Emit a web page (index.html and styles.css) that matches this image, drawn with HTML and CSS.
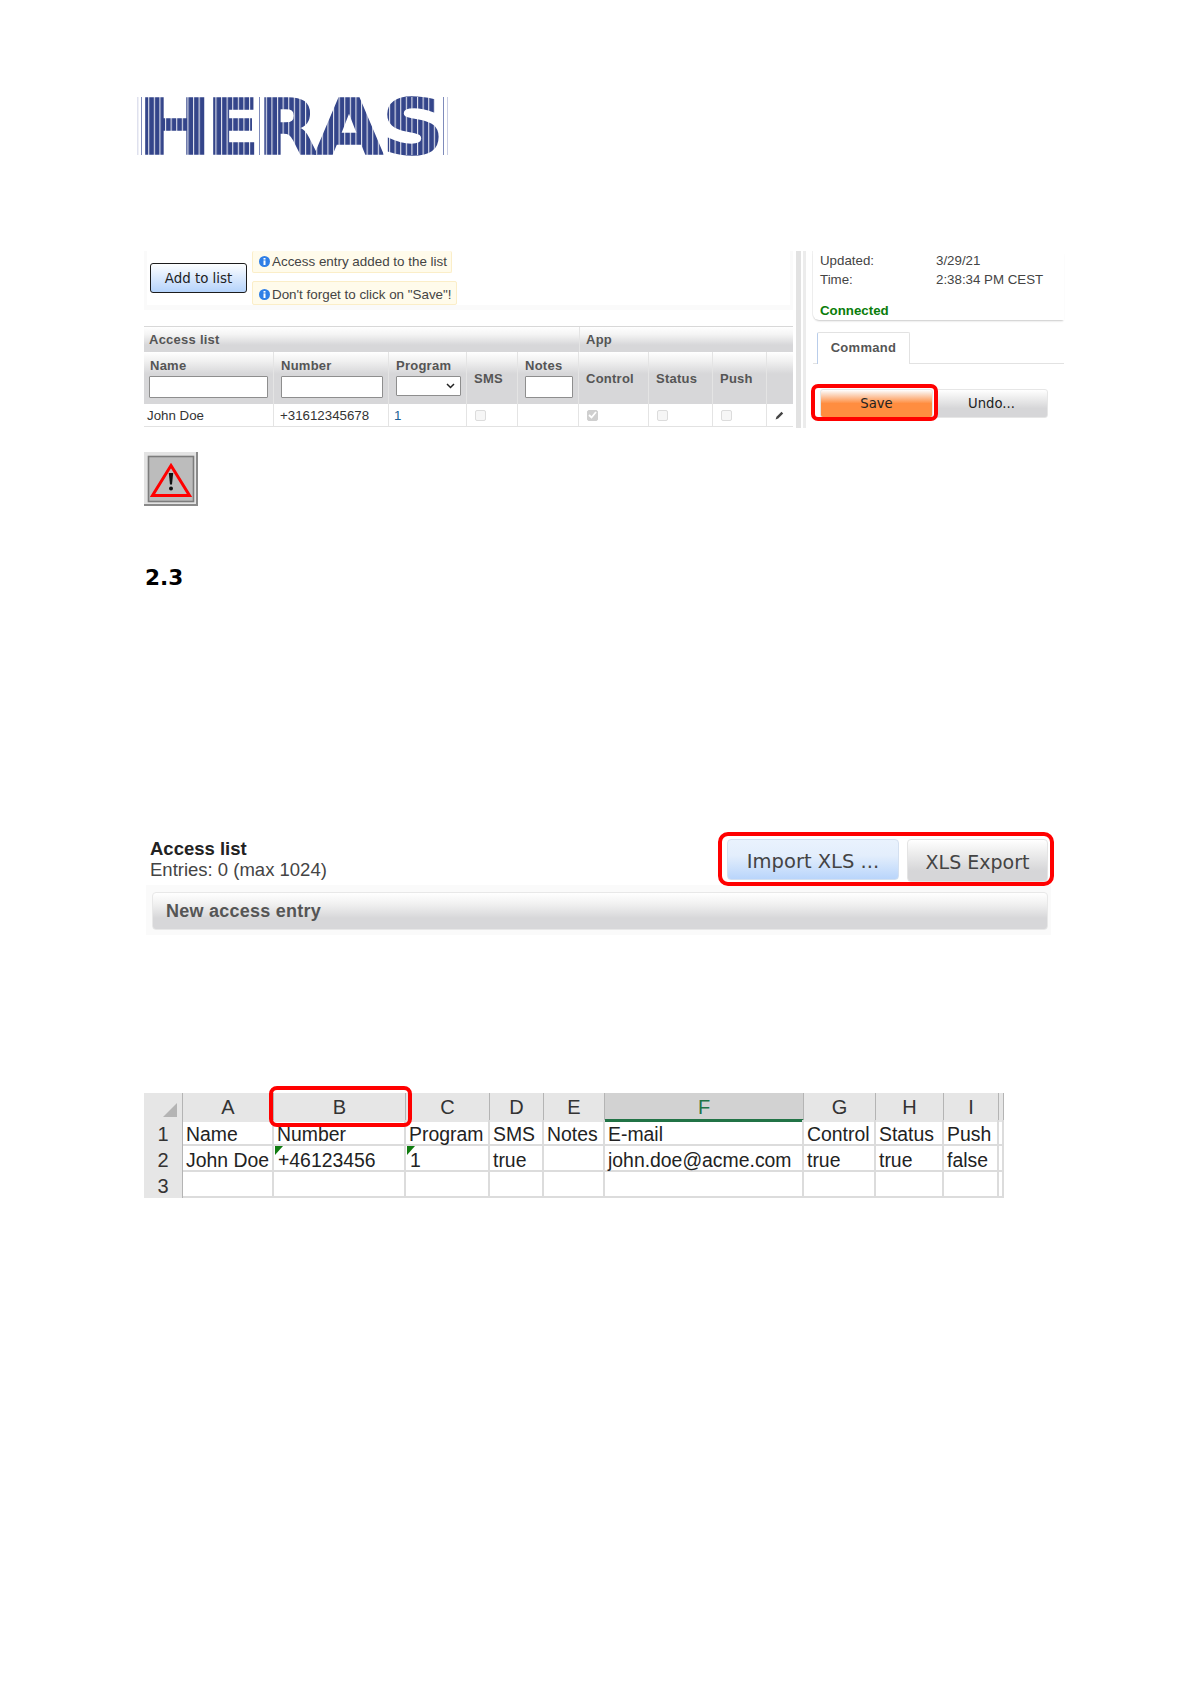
FILE: index.html
```html
<!DOCTYPE html>
<html lang="en">
<head>
<meta charset="utf-8">
<title>Access list</title>
<link rel="stylesheet" href="styles.css">
</head>
<body>
<main class="page">
  <svg class="logo" width="312" height="58" viewBox="0 0 312 58" role="img" aria-label="HERAS">
    <defs>
      <pattern id="stripes" width="5.6" height="58" patternUnits="userSpaceOnUse">
        <rect x="0" y="0" width="1.1" height="58" fill="#fff" opacity=".85"/>
      </pattern>
    </defs>
    <text class="logo-text" y="56.5"><tspan x="1" textLength="74" lengthAdjust="spacingAndGlyphs">H</tspan><tspan x="70" textLength="52" lengthAdjust="spacingAndGlyphs">E</tspan><tspan x="121" textLength="60" lengthAdjust="spacingAndGlyphs">R</tspan><tspan x="178" textLength="68" lengthAdjust="spacingAndGlyphs">A</tspan><tspan x="245" textLength="62" lengthAdjust="spacingAndGlyphs">S</tspan></text>
    <rect x="0" y="0" width="312" height="58" fill="url(#stripes)"/>
    <rect x="0" y="0" width="1.5" height="58" fill="#dfe1ee"/>
    <rect x="4" y="0" width="1" height="58" fill="#7f8bbb"/>
    <rect x="122" y="0" width="1" height="58" fill="#7f8bbb"/>
    <rect x="306" y="0" width="1" height="58" fill="#7f8bbb"/>
    <rect x="310" y="0" width="1" height="58" fill="#c9cde3"/>
  </svg>

  <section class="screen">
    <div class="screen-left">
      <div class="notice-box">
        <div class="notice-inner">
          <button class="btn-add" type="button">Add to list</button>
          <div class="notices">
            <div class="notice notice-first">
              <svg class="info" width="11" height="11" viewBox="0 0 11 11"><circle cx="5.5" cy="5.5" r="5.5" fill="#2f7fe6"/><rect x="4.5" y="2" width="2" height="1.6" fill="#fff"/><rect x="4.5" y="4.4" width="2" height="4.6" fill="#fff"/></svg>
              <span>Access entry added to the list</span>
            </div>
            <div class="notice notice-second">
              <svg class="info" width="11" height="11" viewBox="0 0 11 11"><circle cx="5.5" cy="5.5" r="5.5" fill="#2f7fe6"/><rect x="4.5" y="2" width="2" height="1.6" fill="#fff"/><rect x="4.5" y="4.4" width="2" height="4.6" fill="#fff"/></svg>
              <span>Don't forget to click on "Save"!</span>
            </div>
          </div>
        </div>
      </div>

      <div class="access">
        <div class="group-row">
          <div class="group group-main">Access list</div>
          <div class="group group-app">App</div>
        </div>
        <div class="head-row">
          <div class="hcell hcell-stack hcell-name"><span>Name</span><input class="field" type="text"></div>
          <div class="hcell hcell-stack hcell-wide"><span>Number</span><input class="field" type="text"></div>
          <div class="hcell hcell-stack hcell-wide"><span>Program</span>
            <div class="select"><svg width="9" height="6" viewBox="0 0 9 6"><path d="M1 1l3.5 3.5L8 1" fill="none" stroke="#222" stroke-width="1.5"/></svg></div>
          </div>
          <div class="hcell hcell-mid">SMS</div>
          <div class="hcell hcell-stack hcell-notes"><span>Notes</span><input class="field" type="text"></div>
          <div class="hcell hcell-mid">Control</div>
          <div class="hcell hcell-mid">Status</div>
          <div class="hcell hcell-mid">Push</div>
          <div class="hcell"></div>
        </div>
        <div class="data-row">
          <div class="dcell dcell-name">John Doe</div>
          <div class="dcell dcell-number">+31612345678</div>
          <div class="dcell dcell-blue">1</div>
          <div class="dcell dcell-check"><span class="check"></span></div>
          <div class="dcell"></div>
          <div class="dcell dcell-check"><span class="check check-on"><svg width="9" height="8" viewBox="0 0 9 8"><path d="M1 4l2.5 2.5L8 1" fill="none" stroke="#fff" stroke-width="1.8"/></svg></span></div>
          <div class="dcell dcell-check"><span class="check"></span></div>
          <div class="dcell dcell-check"><span class="check"></span></div>
          <div class="dcell dcell-edit"><svg width="9" height="9" viewBox="0 0 9 9"><path d="M6.5.8l1.7 1.7-5 5-2.6.9.9-2.6z" fill="#444"/></svg></div>
        </div>
      </div>
    </div>

    <div class="splitter"><span class="split-a"></span><span class="split-b"></span></div>

    <aside class="side">
      <div class="status">
        <div class="status-grid">
          <span>Updated:</span><span>3/29/21</span>
          <span>Time:</span><span>2:38:34 PM CEST</span>
        </div>
        <div class="connected">Connected</div>
      </div>
      <div class="tabs"><div class="tab">Command</div></div>
      <div class="commands">
        <button class="btn-cmd btn-save" type="button">Save</button>
        <button class="btn-cmd btn-undo" type="button">Undo...</button>
        <div class="red-box red-save"></div>
      </div>
    </aside>
  </section>

  <svg class="warning" width="54" height="54" viewBox="0 0 54 54" role="img" aria-label="Warning">
    <rect width="54" height="54" fill="#e3e3e3"/>
    <path d="M54 0v54H0v-2h52V0z" fill="#8a8a8a"/>
    <rect x="4.5" y="4.5" width="45" height="45" fill="#bcbcbc" stroke="#7c7c7c" stroke-width="1.6"/>
    <path d="M27 13.5L45.5 43.5H8.5z" fill="none" stroke="#f00" stroke-width="3"/>
    <path d="M24.8 21h4.4l-1.2 11.5h-2z" fill="#111"/>
    <circle cx="27" cy="36.5" r="2" fill="#111"/>
  </svg>

  <h2 class="heading">2.3</h2>

  <section class="import">
    <div class="import-head">
      <div class="import-title">
        <div class="import-name">Access list</div>
        <div class="import-count">Entries: 0 (max 1024)</div>
      </div>
      <div class="import-actions">
        <button class="btn-xls btn-import" type="button">Import XLS ...</button>
        <button class="btn-xls btn-export" type="button">XLS Export</button>
      </div>
      <div class="red-box red-xls"></div>
    </div>
    <div class="entry-wrap"><div class="entry-bar">New access entry</div></div>
  </section>

  <section class="sheet">
    <div class="sh-row sh-top">
      <div class="sh-corner"><svg width="14" height="14" viewBox="0 0 14 14"><path d="M14 0v14H0z" fill="#b4b4b4"/></svg></div>
      <div class="sh-col">A</div><div class="sh-col">B</div><div class="sh-col">C</div><div class="sh-col">D</div><div class="sh-col">E</div>
      <div class="sh-col sh-col-active">F</div>
      <div class="sh-col">G</div><div class="sh-col">H</div><div class="sh-col">I</div><div class="sh-col"></div>
    </div>
    <div class="sh-row">
      <div class="sh-num">1</div>
      <div class="sh-cell">Name</div><div class="sh-cell">Number</div><div class="sh-cell">Program</div><div class="sh-cell">SMS</div><div class="sh-cell">Notes</div><div class="sh-cell">E-mail</div><div class="sh-cell">Control</div><div class="sh-cell">Status</div><div class="sh-cell">Push</div><div class="sh-cell"></div>
    </div>
    <div class="sh-row">
      <div class="sh-num">2</div>
      <div class="sh-cell">John Doe</div><div class="sh-cell sh-flag">+46123456</div><div class="sh-cell sh-flag">1</div><div class="sh-cell">true</div><div class="sh-cell"></div><div class="sh-cell">john.doe@acme.com</div><div class="sh-cell">true</div><div class="sh-cell">true</div><div class="sh-cell">false</div><div class="sh-cell"></div>
    </div>
    <div class="sh-row sh-last">
      <div class="sh-num">3</div>
      <div class="sh-cell"></div><div class="sh-cell"></div><div class="sh-cell"></div><div class="sh-cell"></div><div class="sh-cell"></div><div class="sh-cell"></div><div class="sh-cell"></div><div class="sh-cell"></div><div class="sh-cell"></div><div class="sh-cell"></div>
    </div>
    <div class="red-box red-col"></div>
  </section>
</main>
</body>
</html>
```

FILE: styles.css
```css
* { box-sizing: border-box; }
html, body { margin: 0; padding: 0; background: #fff; }
body { font-family: "Liberation Sans", Arial, sans-serif; color: #333; }
.page { width: 1193px; height: 1685px; overflow: hidden; padding-top: 97px; }
button { font: inherit; padding: 0; cursor: default; }

.logo { display: block; margin-left: 137px; overflow: visible; }
.logo-text { font-family: "DejaVu Sans", sans-serif; font-weight: 700; font-size: 76px; fill: #34458a; stroke: #34458a; stroke-width: 1.6px; }

.red-box { position: absolute; border: 4px solid #f00; pointer-events: none; }

/* first screenshot */
.screen { display: flex; margin: 96px 0 0 144px; width: 920px; height: 177px; }
.screen-left { width: 649px; flex: none; }
.notice-box { height: 59px; background: #fafafa; padding: 0 3px 5px; }
.notice-inner { display: flex; height: 54px; background: #fff; padding-left: 3px; }
.btn-add { width: 97px; height: 30px; margin-top: 12px; border: 1px solid #1c1c1c; border-radius: 3px; background: linear-gradient(#fdfeff, #b5d3fb); font-family: "DejaVu Sans", sans-serif; font-size: 13.4px; color: #222; }
.notices { display: flex; flex-direction: column; align-items: flex-start; gap: 8px; margin-left: 5px; }
.notice { display: flex; align-items: center; gap: 2px; padding: 0 4px 0 6px; background: #fffbeb; border: 1px solid #fbeec8; border-radius: 2px; font-size: 13.4px; color: #444; white-space: nowrap; }
.notice-first { height: 22px; border-top: 0; }
.notice-second { height: 24px; padding-top: 2px; }
.info { flex: none; }

.access { margin-top: 16px; border-top: 1px solid #d8d8d8; border-bottom: 1px solid #e2e2e2; }
.group-row { display: grid; grid-template-columns: 435px 1fr; height: 25px; }
.group { display: flex; align-items: center; padding-left: 5px; font-weight: 700; font-size: 13px; letter-spacing: .25px; color: #555; background: linear-gradient(#fff 0, #f4f4f4 30%, #d7d7d9 72%, #d7d7d9 100%); }
.group-app { border-left: 1px solid #e4e4e4; padding-left: 6px; }
.head-row, .data-row { display: grid; grid-template-columns: 130px 115px 78px 51px 61px 70px 64px 54px 26px; }
.head-row { height: 52px; }
.hcell { font-weight: 700; font-size: 13px; letter-spacing: .25px; color: #555; border-right: 1px solid #e4e4e4; background: linear-gradient(#fff 0, #f0f0f0 18%, #d7d7d9 42%, #d7d7d9 100%); padding-left: 7px; }
.hcell:last-child { border-right: 0; }
.hcell-stack { display: flex; flex-direction: column; gap: 3px; padding: 6px 5px 0; line-height: 15px; }
.hcell-name span { padding-left: 1px; }
.hcell-wide { padding-left: 7px; }
.hcell-notes { padding-left: 7px; }
.hcell-mid { display: flex; align-items: center; }
.field { display: block; width: 100%; height: 22px; margin: 0; padding: 0; background: #fff; border: 1px solid #8e8e8e; border-radius: 1px; }
.select { display: flex; align-items: center; justify-content: flex-end; width: 65px; height: 20px; padding-right: 5px; background: #fff; border: 1px solid #8e8e8e; border-radius: 1px; }
.data-row { height: 22px; }
.dcell { display: flex; align-items: center; padding-left: 3px; font-size: 13.3px; color: #333; border-right: 1px solid #e4e4e4; }
.dcell:last-child { border-right: 0; }
.dcell-number { padding-left: 6px; }
.dcell-blue { color: #1c5f96; padding-left: 5px; }
.dcell-check { padding-left: 8px; }
.dcell-edit { padding-left: 8px; }
.check { display: flex; align-items: center; justify-content: center; width: 11px; height: 11px; background: #f6f6f6; border: 1px solid #dcdcdc; border-radius: 2px; }
.check-on { background: #cfcfcf; border-color: #cfcfcf; }

.splitter { display: flex; flex: none; width: 20px; padding-left: 3px; gap: 2px; height: 177px; }
.split-a { width: 5px; background: #e2e2e2; }
.split-b { width: 3px; background: #ececec; }

.side { position: relative; flex: none; width: 251px; font-size: 13.3px; }
.status { height: 69px; padding-left: 7px; border-bottom-left-radius: 6px; box-shadow: 0 2px 2px -1px #c9c9c9, -1px 0 0 #f0f0f0; }
.status-grid { display: grid; grid-template-columns: 116px 1fr; grid-auto-rows: 19px; align-items: center; color: #444; }
.connected { margin-top: 12px; line-height: 19px; font-weight: 700; color: #0a7d0a; }
.tabs { margin-top: 12px; height: 32px; padding-left: 4px; border-bottom: 1px solid #e2e2e2; }
.tab { display: flex; align-items: center; justify-content: center; width: 93px; height: 32px; padding-bottom: 3px; font-weight: 700; font-size: 13px; letter-spacing: .3px; color: #555; background: #fff; border: 1px solid #e2e2e2; border-left-color: #b9cdea; border-bottom: 0; border-radius: 2px 2px 0 0; }
.commands { position: relative; display: flex; margin: 25px 0 0 7px; }
.btn-cmd { height: 29px; border: 1px solid #e6e6e6; font-family: "DejaVu Sans", sans-serif; font-size: 13.2px; color: #222; }
.btn-save { width: 113px; border-radius: 3px; background: linear-gradient(#fff 0, #fbe3d3 12%, #ff8d40 50%, #ff8d40 100%); }
.btn-undo { width: 113px; margin-left: 2px; border-radius: 0 3px 3px 0; background: linear-gradient(#fff 0, #f0f0f0 25%, #d6d6d8 68%, #d6d6d8 100%); }
.red-save { left: -9px; top: -5px; width: 127px; height: 37px; border-radius: 7px; }

.warning { display: block; margin: 24px 0 0 144px; }
.heading { margin: 60px 0 0 145px; font-family: "DejaVu Sans", sans-serif; font-size: 21.6px; line-height: 24px; font-weight: 700; color: #000; }

/* import / export screenshot */
.import { margin: 248px 0 0 146px; width: 908px; }
.import-head { position: relative; display: flex; justify-content: space-between; height: 47px; }
.import-title { padding-left: 4px; font-size: 18.5px; line-height: 21px; }
.import-name { font-weight: 700; color: #222; }
.import-count { color: #444; }
.import-actions { display: flex; gap: 8px; padding: 1px 6px 0 0; }
.btn-xls { height: 41px; padding-top: 3px; border: 1px solid #e4e4e4; border-radius: 4px; font-family: "DejaVu Sans", sans-serif; color: #444; }
.btn-import { width: 172px; font-size: 19.5px; background: linear-gradient(#e9f2fd 0, #e3eefc 40%, #b9d5fb 100%); border-color: #d4e0f0; }
.btn-export { width: 141px; height: 43px; font-size: 19px; background: linear-gradient(#fff 0, #eeeeee 30%, #d6d6d8 75%, #d6d6d8 100%); }
.red-xls { left: 572px; top: -6px; width: 336px; height: 54px; border-radius: 10px; }
.entry-wrap { width: 905px; height: 50px; padding: 7px 3px 5px 6px; background: #fafafa; }
.entry-bar { display: flex; align-items: center; height: 38px; padding-left: 13px; border: 1px solid #e8e8e8; border-radius: 4px; font-weight: 700; font-size: 18px; letter-spacing: .25px; color: #555; background: linear-gradient(#fff 0, #f1f1f1 30%, #d7d7d9 70%, #d7d7d9 100%); }

/* spreadsheet */
.sheet { position: relative; margin: 158px 0 0 144px; width: 860px; font-size: 19.4px; color: #222; }
.sh-row { display: grid; grid-template-columns: 39px 91px 132px 84px 54px 61px 199px 72px 68px 55px 5px; height: 26px; border-bottom: 2px solid #dcdcdc; }
.sh-top { height: 27px; border-bottom: 1px solid #a8a8a8; }
.sh-corner { display: flex; align-items: flex-end; justify-content: flex-end; padding: 0 5px 5px 0; background: #e6e6e6; border-right: 1px solid #b4b4b4; }
.sh-col { display: flex; align-items: center; justify-content: center; background: #e6e6e6; border-right: 1px solid #b4b4b4; color: #333; font-size: 20px; }
.sh-col-active { padding-top: 3px; background: #d2d2d2; border-bottom: 3px solid #217346; color: #217346; }
.sh-num { display: flex; align-items: center; justify-content: center; padding-top: 3px; background: #e6e6e6; border-right: 1px solid #b4b4b4; color: #333; font-size: 20px; }
.sh-cell { position: relative; display: flex; align-items: center; padding: 3px 0 0 3px; border-right: 2px solid #dcdcdc; white-space: nowrap; }
.sh-flag { padding-left: 4px; }
.sh-flag::before { content: ""; position: absolute; left: 1px; top: 0; border-top: 9px solid #107c10; border-right: 8px solid transparent; }
.red-col { left: 125px; top: -7px; width: 143px; height: 41px; border-radius: 8px; }
```
